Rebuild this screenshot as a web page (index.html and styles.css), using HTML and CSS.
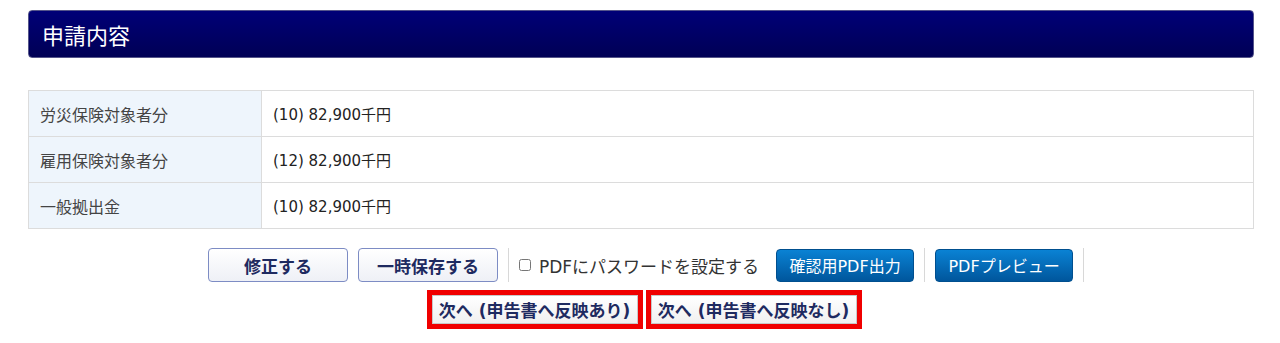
FILE: index.html
```html
<!DOCTYPE html>
<html>

<head>
	<title>申請内容</title>
	<meta charset=utf-8>
	<meta name=viewport content="width=device-width, initial-scale=1">
	<link rel="stylesheet" href="styles.css">
</head>

<body>
	<div id="page">
		<div class="section-title">申請内容</div>

		<table class="info">
			<tr>
				<th>労災保険対象者分</th>
				<td>(10) 82,900千円</td>
			</tr>
			<tr>
				<th>雇用保険対象者分</th>
				<td>(12) 82,900千円</td>
			</tr>
			<tr>
				<th>一般拠出金</th>
				<td>(10) 82,900千円</td>
			</tr>
		</table>

		<div class="actions">
			<button class="btn">修正する</button>
			<button class="btn">一時保存する</button>
			<span class="sep"></span>
			<label class="pw"><input type="checkbox"> PDFにパスワードを設定する</label>
			<button class="btn-blue">確認用PDF出力</button>
			<span class="sep"></span>
			<button class="btn-blue">PDFプレビュー</button>
			<span class="sep"></span>
		</div>

		<div class="next">
			<span class="mark"><button class="btn-next">次へ (申告書へ反映あり)</button></span>
			<span class="mark"><button class="btn-next">次へ (申告書へ反映なし)</button></span>
		</div>
	</div>
</body>

</html>
```

FILE: styles.css
```css
body {
	margin: 0;
	background: white;
	font-family: "DejaVu Sans", "Noto Sans CJK JP", sans-serif;
	color: #333;
}

#page {
	padding: 10px 26px 0 28px;
}

.section-title {
	height: 48px;
	box-sizing: border-box;
	padding: 0 13px;
	display: flex;
	align-items: center;
	font-size: 22px;
	color: white;
	background: linear-gradient(#000077, #000055);
	border: 1px solid #55558a;
	border-radius: 4px;
	margin-bottom: 32px;
}

.info {
	width: 100%;
	border-collapse: collapse;
	border: 1px solid #dcdcdc;
	font-size: 15px;
}

.info th,
.info td {
	height: 45px;
	padding: 0 11px;
	border-bottom: 1px solid #dcdcdc;
	text-align: left;
	font-weight: normal;
}

.info th {
	width: 210px;
	background: #eef5fc;
	border-right: 1px solid #dcdcdc;
	color: #444;
	font-size: 16px;
}

.info td {
	color: #222;
}

.actions {
	display: flex;
	justify-content: center;
	align-items: center;
	gap: 10px;
	margin-top: 19px;
	padding-left: 10px;
}

.btn {
	width: 140px;
	height: 34px;
	font-family: inherit;
	font-size: 17px;
	font-weight: bold;
	color: #1e2a60;
	background: linear-gradient(#ffffff, #eef0f6);
	border: 1px solid #7d8cc4;
	border-radius: 4px;
}

.sep {
	width: 1px;
	height: 34px;
	background: #d8d8d8;
}

.pw {
	display: flex;
	align-items: center;
	font-size: 17px;
	color: #333;
	margin-right: 7px;
}

.pw input {
	width: 12px;
	height: 12px;
	margin: 0 8px 0 0;
}

.btn-blue {
	width: 138px;
	height: 33px;
	font-family: inherit;
	font-size: 16px;
	color: white;
	background: linear-gradient(#0a82d4, #00569c);
	border: 1px solid #004f8f;
	border-radius: 4px;
}

.next {
	display: flex;
	justify-content: center;
	gap: 3px;
	margin-top: 8px;
	padding-left: 6px;
}

.mark {
	border: 5px solid #f00000;
	display: flex;
}

.btn-next {
	width: 206px;
	height: 29px;
	font-family: inherit;
	font-size: 17px;
	font-weight: bold;
	color: #1e2a60;
	background: linear-gradient(#ffffff, #f0f0f0);
	border: 1px solid #c8c8c8;
	padding: 0;
}
```
